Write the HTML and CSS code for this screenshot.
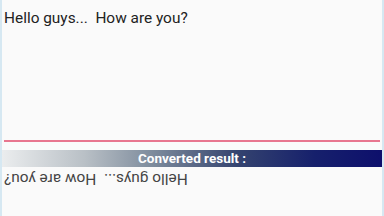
FILE: index.html
```html
<!DOCTYPE html>
<html>
<head>
    <title>Upside Down Text</title>
    <link rel="stylesheet" href="styles.css">
</head>
<body>
    <div class="page">
        <div class="input-box">
            <div class="input-text">Hello guys...  How are you?</div>
        </div>

        <div class="result-bar">Converted result :</div>

        <div class="result">
            <span class="flipped">Hello guys...  How are you?</span>
        </div>
    </div>
</body>
</html>
```

FILE: styles.css
```css
html, body {
    margin: 0;
    padding: 0;
    background: #fafafa;
}
body {
    font-family: Roboto, "Liberation Sans", sans-serif;
}
.page {
    box-sizing: border-box;
    width: 384px;
    height: 216px;
    border-left: 2px solid #d6e8f2;
    border-right: 2px solid #d6e8f2;
    overflow: hidden;
}
.input-box {
    margin: 0 2px;
    height: 142px;
    border-bottom: 2px solid #e8768f;
    box-sizing: border-box;
    padding-top: 9px;
}
.input-text {
    font-size: 15.4px;
    color: #222;
    white-space: pre;
}
.result-bar {
    margin-top: 8px;
    margin-left: -2px;
    margin-right: -2px;
    height: 17px;
    line-height: 17px;
    text-align: center;
    color: #fff;
    font-size: 13.5px;
    font-weight: bold;
    background: linear-gradient(to right, #eceeef 0%, #b9c0c6 22%, #7d8b9c 40%, #34436f 62%, #16206c 82%, #0d0f6c 100%);
}
.result {
    padding: 2px 0 0 2px;
}
.flipped {
    display: inline-block;
    font-size: 15.4px;
    color: #444;
    white-space: pre;
    transform: rotate(180deg);
}
```
